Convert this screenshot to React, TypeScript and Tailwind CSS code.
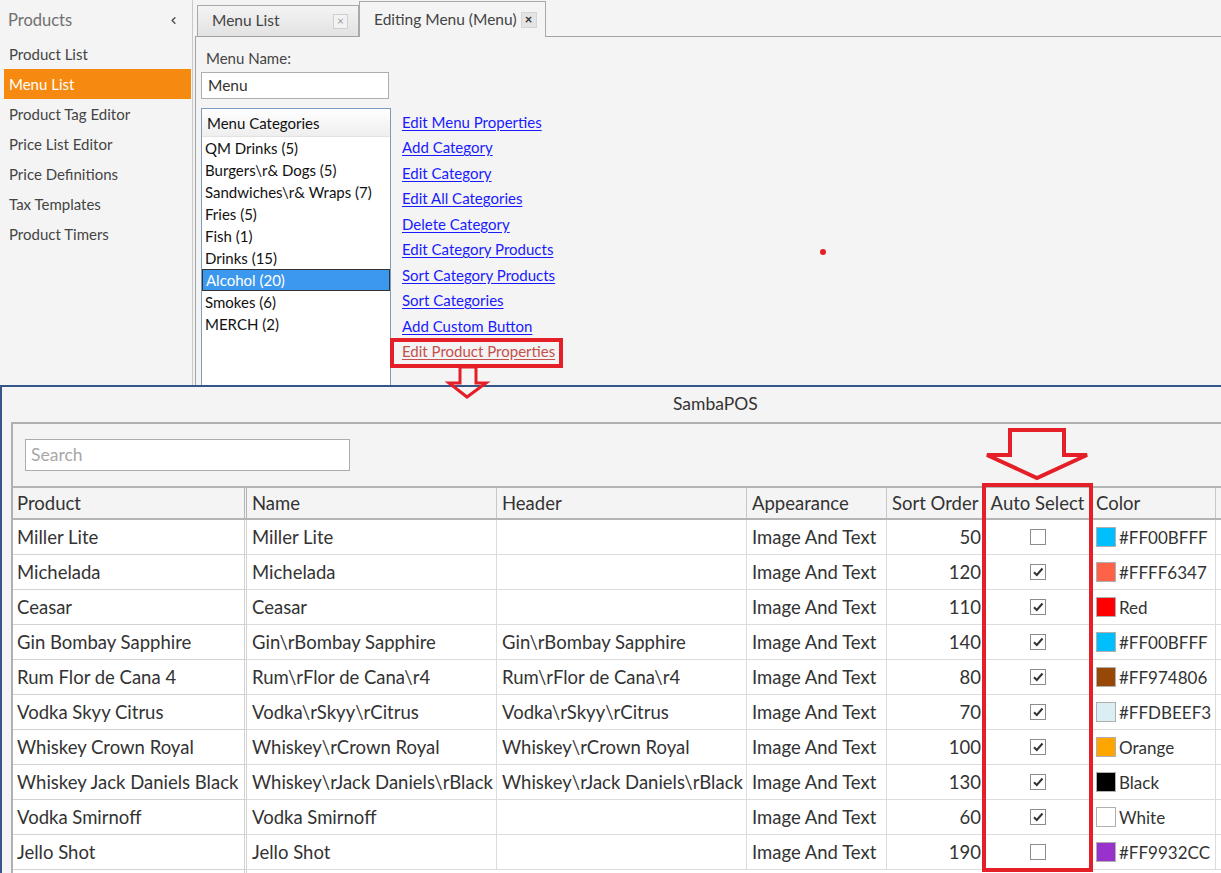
import { ChevronLeft } from "lucide-react";

const sidebarItems = [
  "Product List",
  "Menu List",
  "Product Tag Editor",
  "Price List Editor",
  "Price Definitions",
  "Tax Templates",
  "Product Timers",
];

const categories = [
  "QM Drinks (5)",
  "Burgers\\r& Dogs (5)",
  "Sandwiches\\r& Wraps (7)",
  "Fries (5)",
  "Fish (1)",
  "Drinks (15)",
  "Alcohol (20)",
  "Smokes (6)",
  "MERCH (2)",
];

const links = [
  "Edit Menu Properties",
  "Add Category",
  "Edit Category",
  "Edit All Categories",
  "Delete Category",
  "Edit Category Products",
  "Sort Category Products",
  "Sort Categories",
  "Add Custom Button",
];

type Row = {
  product: string;
  name: string;
  header: string;
  order: number;
  auto: boolean;
  color: string;
  swatch: string;
};

const rows: Row[] = [
  { product: "Miller Lite", name: "Miller Lite", header: "", order: 50, auto: false, color: "#FF00BFFF", swatch: "#00BFFF" },
  { product: "Michelada", name: "Michelada", header: "", order: 120, auto: true, color: "#FFFF6347", swatch: "#FF6347" },
  { product: "Ceasar", name: "Ceasar", header: "", order: 110, auto: true, color: "Red", swatch: "#FF0000" },
  { product: "Gin Bombay Sapphire", name: "Gin\\rBombay Sapphire", header: "Gin\\rBombay Sapphire", order: 140, auto: true, color: "#FF00BFFF", swatch: "#00BFFF" },
  { product: "Rum Flor de Cana 4", name: "Rum\\rFlor de Cana\\r4", header: "Rum\\rFlor de Cana\\r4", order: 80, auto: true, color: "#FF974806", swatch: "#974806" },
  { product: "Vodka Skyy Citrus", name: "Vodka\\rSkyy\\rCitrus", header: "Vodka\\rSkyy\\rCitrus", order: 70, auto: true, color: "#FFDBEEF3", swatch: "#DBEEF3" },
  { product: "Whiskey Crown Royal", name: "Whiskey\\rCrown Royal", header: "Whiskey\\rCrown Royal", order: 100, auto: true, color: "Orange", swatch: "#FFA500" },
  { product: "Whiskey Jack Daniels Black", name: "Whiskey\\rJack Daniels\\rBlack", header: "Whiskey\\rJack Daniels\\rBlack", order: 130, auto: true, color: "Black", swatch: "#000000" },
  { product: "Vodka Smirnoff", name: "Vodka Smirnoff", header: "", order: 60, auto: true, color: "White", swatch: "#FFFFFF" },
  { product: "Jello Shot", name: "Jello Shot", header: "", order: 190, auto: false, color: "#FF9932CC", swatch: "#9932CC" },
];

function CheckBox({ checked }: { checked: boolean }) {
  return (
    <div className="w-[16px] h-[16px] border border-[#8c8c8c] bg-white flex items-center justify-center">
      {checked && (
        <svg width="12" height="12" viewBox="0 0 12 12">
          <path d="M2 6.2 L4.8 9 L10.5 2.5" fill="none" stroke="#333" strokeWidth="2" />
        </svg>
      )}
    </div>
  );
}

function Sidebar() {
  return (
    <div className="w-[193px] shrink-0 border-r border-[#c8c8c8] pl-[4px] pr-[1px] pt-[2px]">
      <div className="h-[37px] flex items-center justify-between pl-[4px] pr-[12px] text-[16.5px] text-[#707070]">
        <span>Products</span>
        <ChevronLeft size={11} strokeWidth={3.5} className="text-[#555]" />
      </div>
      {sidebarItems.map((item) => (
        <div
          key={item}
          className={
            item === "Menu List"
              ? "h-[30px] flex items-center pl-[5px] text-[15px] bg-[#f6890f] text-white"
              : "h-[30px] flex items-center pl-[5px] text-[15px] text-[#444]"
          }
        >
          {item}
        </div>
      ))}
    </div>
  );
}

function EditorPane() {
  return (
    <div className="flex-1 flex flex-col pl-[2px] min-w-0">
      <div className="h-[37px] shrink-0 flex items-end border-b border-[#a3a3a3] pl-[2px]">
        <div className="h-[31px] w-[162px] border border-b-0 border-[#a9a9a9] bg-gradient-to-b from-[#f4f4f4] to-[#e2e2e2] flex items-center justify-between pl-[14px] pr-[10px] text-[15.5px] text-[#444]">
          <span>Menu List</span>
          <span className="w-[15px] h-[15px] border border-[#cfcfcf] bg-[#f2f2f2] flex items-center justify-center text-[12px] leading-none text-[#9a9a9a]">
            ×
          </span>
        </div>
        <div className="h-[36px] w-[187px] -mb-px relative border border-b-0 border-[#a9a9a9] bg-[#f4f4f4] flex items-center pl-[14px] text-[15.5px] text-[#444]">
          <span>Editing Menu (Menu)</span>
          <span className="ml-[4px] w-[16px] h-[16px] border border-[#d4d4d4] bg-[#e4e4e4] flex items-center justify-center text-[13px] font-bold leading-none text-[#333]">
            ×
          </span>
        </div>
      </div>
      <div className="flex-1 border-l border-[#a3a3a3] pl-[5px] overflow-hidden">
        <div className="mt-[11px] pl-[5px] h-[20px] leading-[20px] text-[15px] text-[#444]">Menu Name:</div>
        <div className="mt-[4px] w-[188px] h-[27px] border border-[#adadad] bg-white flex items-center pl-[6px] pt-[1px] text-[15.5px] text-[#333]">
          Menu
        </div>
        <div className="mt-[9px] flex">
          <div className="w-[190px] h-[300px] shrink-0 border border-[#7a9cc0] bg-white">
            <div className="h-[28px] pt-[1px] border-b border-[#e2e2e2] bg-gradient-to-b from-white to-[#eeeeee] flex items-center pl-[5px] text-[15px] text-[#111]">
              Menu Categories
            </div>
            {categories.map((c) => (
              <div
                key={c}
                className={
                  c === "Alcohol (20)"
                    ? "h-[22px] flex items-center pl-[3px] text-[15px] bg-[#3c98ee] text-white border border-[#333]"
                    : "h-[22px] flex items-center pl-[3px] text-[15px] text-[#111]"
                }
              >
                {c}
              </div>
            ))}
          </div>
          <div className="ml-[11px] pt-[1px] flex flex-col">
            {links.map((l) => (
              <div key={l} className="h-[25.5px] flex items-center text-[15px]">
                <span className="text-[#1a1aff] underline underline-offset-2">{l}</span>
              </div>
            ))}
            <div className="h-[25.5px] flex items-center text-[15px]">
              <span className="text-[#c4504d] underline underline-offset-2">Edit Product Properties</span>
            </div>
          </div>
        </div>
      </div>
    </div>
  );
}

const cols = "grid grid-cols-[234px_250px_250px_140px_98px_106px_125px_1fr]";

function ProductTable() {
  return (
    <div className="mt-[15px] text-[18.5px] text-[#333]">
      <div className={`${cols} h-[34px] border-t-2 border-b-2 border-[#b4b4b4] bg-[#f4f4f4]`}>
        <div className="border-r-[3px] border-double border-[#b4b4b4] flex items-center pt-[2px] pl-[4px]">Product</div>
        <div className="border-r border-[#c8c8c8] flex items-center pt-[2px] pl-[5px]">Name</div>
        <div className="border-r border-[#c8c8c8] flex items-center pt-[2px] pl-[5px]">Header</div>
        <div className="border-r border-[#c8c8c8] flex items-center pt-[2px] pl-[5px]">Appearance</div>
        <div className="border-r border-[#c8c8c8] flex items-center pt-[2px] pl-[5px] whitespace-nowrap overflow-hidden">Sort Order</div>
        <div className="border-r border-[#c8c8c8] flex items-center pt-[2px] justify-center whitespace-nowrap">Auto Select</div>
        <div className="border-r border-[#c8c8c8] flex items-center pt-[2px] pl-[5px]">Color</div>
        <div />
      </div>
      {rows.map((r, i) => (
        <div key={i} className={`${cols} h-[35px] bg-white`}>
          <div className="border-r-[3px] border-double border-b border-[#d2d2d2] flex items-center pt-[2px] pl-[4px] whitespace-nowrap">{r.product}</div>
          <div className="border-r border-b border-[#dcdcdc] flex items-center pt-[2px] pl-[5px] whitespace-nowrap">{r.name}</div>
          <div className="border-r border-b border-[#dcdcdc] flex items-center pt-[2px] pl-[5px] whitespace-nowrap">{r.header}</div>
          <div className="border-r border-b border-[#dcdcdc] flex items-center pt-[2px] pl-[5px] whitespace-nowrap">Image And Text</div>
          <div className="border-r border-b border-[#dcdcdc] flex items-center pt-[2px] justify-end pr-[3px]">{r.order}</div>
          <div className="border-r border-b border-[#dcdcdc] flex items-center justify-center">
            <CheckBox checked={r.auto} />
          </div>
          <div className="border-r border-b border-[#dcdcdc] flex items-center pl-[5px] whitespace-nowrap text-[17px]">
            <span className="w-[20px] h-[20px] border border-[#b0b0b0] mr-[3px] shrink-0" style={{ backgroundColor: r.swatch }} />
            <span className="pt-[2px]">{r.color}</span>
          </div>
          <div className="border-b border-[#dcdcdc]" />
        </div>
      ))}
      <div className={`${cols} h-[35px] bg-white`}>
        <div className="border-r-[3px] border-double border-[#d2d2d2]" />
      </div>
    </div>
  );
}

function Annotations() {
  return (
    <svg className="absolute inset-0 pointer-events-none" width="1221" height="873" viewBox="0 0 1221 873">
      <g fill="none" stroke="#e51f27">
        <rect x="392" y="340" width="169" height="26" strokeWidth="4" />
        <polygon points="460,367 460,383 449,383 467,397 486,383 476,383 476,367" strokeWidth="3" />
        <polygon points="1010,430 1064,430 1064,455 1087,455 1037,478 987,455 1010,455" strokeWidth="4" />
        <rect x="984" y="485" width="107" height="385" strokeWidth="4" />
      </g>
      <circle cx="823" cy="252" r="3" fill="#e51f27" />
    </svg>
  );
}

export default function App() {
  return (
    <div className="relative w-[1221px] h-[873px] overflow-hidden bg-[#f4f4f4] font-['Segoe_UI','Lato',sans-serif]">
      <div className="flex h-[385px] overflow-hidden">
        <Sidebar />
        <EditorPane />
      </div>
      <div className="h-[488px] border-t-2 border-l-2 border-[#34568a] flex flex-col">
        <div className="h-[35px] shrink-0 flex items-center pl-[671px] text-[17.5px] text-[#333]">SambaPOS</div>
        <div className="flex-1 pl-[9px] overflow-hidden">
          <div className="h-full border-t-2 border-l-2 border-[#b0b0b0]">
            <div className="pt-[15px] pl-[12px]">
              <div className="w-[325px] h-[32px] border border-[#acacac] bg-white flex items-center pl-[5px] pt-[1px] text-[17.5px] text-[#a8a8a8]">
                Search
              </div>
            </div>
            <ProductTable />
          </div>
        </div>
      </div>
      <Annotations />
    </div>
  );
}
